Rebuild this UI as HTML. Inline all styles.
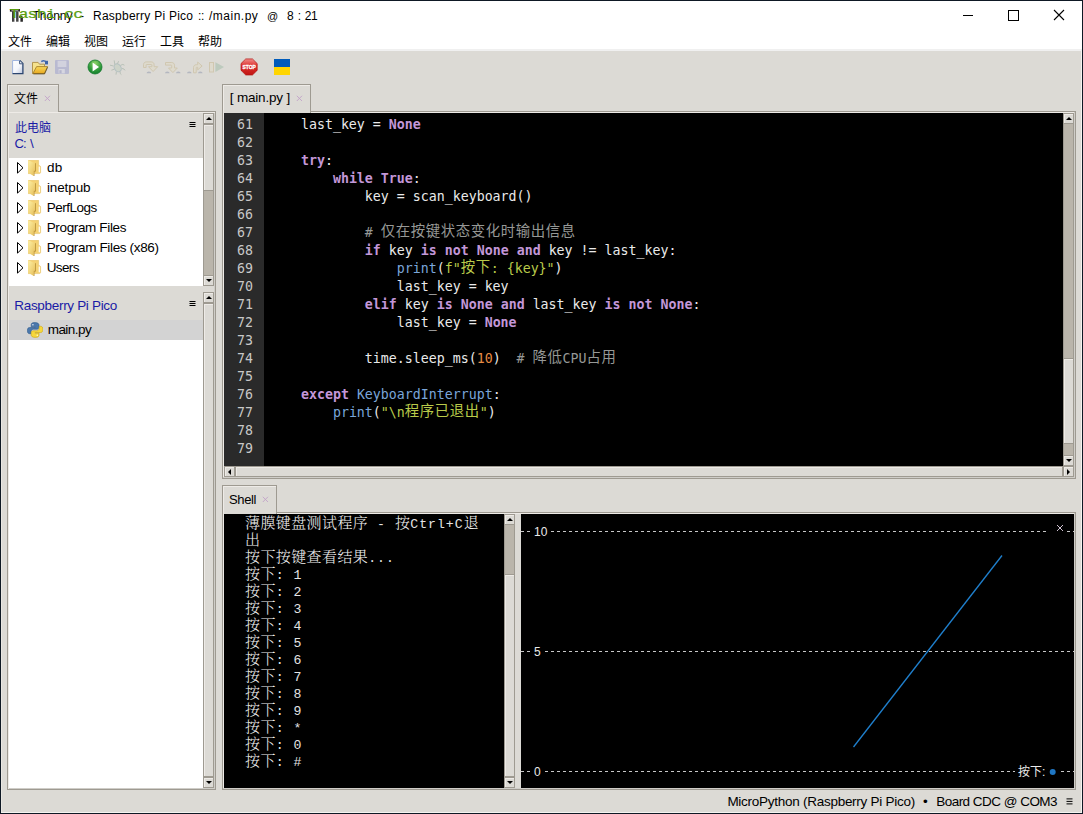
<!DOCTYPE html>
<html lang="zh-CN">
<head>
<meta charset="utf-8">
<title>Thonny - Raspberry Pi Pico :: /main.py @ 8 : 21</title>
<style>
*{box-sizing:border-box;margin:0;padding:0}
html,body{width:1083px;height:814px;overflow:hidden;background:#dcdad5}
body{position:relative;font-family:"Liberation Sans","Noto Sans CJK SC",sans-serif;font-size:13px;color:#000}
.a{position:absolute}
#win{position:absolute;left:0;top:0;width:1083px;height:814px;border:1px solid #0e1824;background:#dcdad5}
#titlebar{position:absolute;left:1px;top:1px;width:1081px;height:50px;background:#fff;border-bottom:2px solid #f0f0f0}
#title{position:absolute;left:0;top:9px;font-size:12px;line-height:15px;white-space:pre;color:#000}
#title span{position:absolute;top:0}
#wm{position:absolute;left:9.4px;top:5px;font-family:"Liberation Mono",monospace;font-weight:normal;-webkit-text-stroke:0.3px #5a9e10;font-size:16.6px;letter-spacing:-0.85px;transform:scaleY(0.8);transform-origin:0 14px;line-height:18px;color:#5a9e10;white-space:pre}
.menu{position:absolute;top:34px;font-size:12px;line-height:16px;white-space:pre}
.tab{position:absolute;background:#dcdad5;border:1px solid #9e9a91;border-bottom:none;box-shadow:inset 1px 1px 0 #eeebe7}
.tl{position:absolute;white-space:pre;font-size:13.5px;line-height:16px}
.tx{position:absolute}
.panel{position:absolute;border:1px solid #9e9a91;background:#dcdad5;box-shadow:inset 1px 1px 0 #eeebe7,inset -1px -1px 0 #cfcdc8}
.sb{position:absolute;background:#bab5ab;border:1px solid #9e9a91}
.btn{position:absolute;background:#dcdad5;border:1px solid #9e9a91;box-shadow:inset 1px 1px 0 #eeebe7}
.au,.ad,.al,.ar{position:absolute;width:0;height:0;border:3px solid transparent}
.au{border-top:none;border-bottom:3px solid #000;border-left-width:3px;border-right-width:3px}
.ad{border-bottom:none;border-top:3px solid #000}
.ar{border-right:none;border-left:3px solid #000}
.al{border-left:none;border-right:3px solid #000}
.trow{position:absolute;left:9px;width:194px;height:20px}
.trow svg.tri{position:absolute;left:8px;top:4.6px}
.trow svg.fold{position:absolute;left:19px;top:3px}
.trow .lbl{position:absolute;left:38px;top:2px;font-size:13.5px;line-height:16px;white-space:pre}
.blue{color:#1a1aa6}
#code{position:absolute;left:264px;top:113px;width:799px;height:353px;background:#000;overflow:hidden}
#gutter{position:absolute;left:224px;top:113px;width:40px;height:353px;background:#2a2a2a;overflow:hidden}
.ln,.cl{position:absolute;height:18px;line-height:18px;white-space:pre;font-family:"DejaVu Sans Mono","Noto Sans CJK SC",monospace;font-size:13.288px;color:#eaeaea}
.ln{color:#c8c8c8;left:13px}
.cl{left:5px}
.k{color:#c397d8;font-weight:bold}
.b{color:#7aa6da}
.s{color:#b9ca4a}
.n{color:#e78c45}
.c{color:#969896}
.cj{line-height:0;font-family:"Noto Sans CJK SC",sans-serif;font-size:14.4px;letter-spacing:0.6px;position:relative;top:-1.4px}
#shell{position:absolute;left:224px;top:514px;width:280px;height:274px;background:#000;overflow:hidden}
.sl{position:absolute;left:21px;height:17px;line-height:17px;white-space:pre;font-family:"Liberation Mono","Noto Serif CJK SC",monospace;font-size:13.2px;letter-spacing:0.98px;color:#e4e4e4}
.sj{line-height:0;font-family:"Noto Serif CJK SC",serif;font-weight:300;font-size:15px;letter-spacing:0.4px;position:relative;top:0.7px;color:#f0f0f0}
#plot{position:absolute;left:521px;top:514px;width:553px;height:274px;background:#000;overflow:hidden}
#plot .pl{position:absolute;font-size:12px;line-height:14px;color:#eaeaea;white-space:pre}
#status{position:absolute;top:794px;left:728px;font-size:13px;line-height:16px;white-space:pre}

</style>
</head>
<body>
<div id="win"></div>
<div id="titlebar"></div>
<svg class="a" style="left:9px;top:8px" width="16" height="16" viewBox="0 0 16 16"><defs><linearGradient id="gth" x1="0" y1="0" x2="1" y2="0"><stop offset="0" stop-color="#1c1c1c"/><stop offset="0.55" stop-color="#4a4a4a"/><stop offset="1" stop-color="#d0d0d0"/></linearGradient></defs><path d="M0.9 1h10v2.600000000000001h-10z" fill="#161616"/><path d="M2.4 2h7v0.9h-7z" fill="#9a9a9a"/><path d="M3.1 3.6h2.8v10.1h-2.8z" fill="url(#gth)"/><path d="M7.2 3.6h2.8v10.1h-2.8z" fill="url(#gth)"/><path d="M10 8.300000000000001c2.2-1.3 3.9-0.4 3.9 1.4v4h-2.5v-3.4c0-0.7-0.5-0.8-1.4-0.3z" fill="#2a2a2a"/></svg>
<div id="title"><span style="left:32.5px">Thonny</span><span style="left:80px">-</span><span style="left:93px;letter-spacing:0.25px">Raspberry Pi Pico</span><span style="left:198px;letter-spacing:-0.4px">::</span><span style="left:209px;letter-spacing:0.5px">/main.py</span><span style="left:267px;font-size:11px">@</span><span style="left:287px">8</span><span style="left:297.8px">:</span><span style="left:304.7px;letter-spacing:-0.3px">21</span></div>
<div id="wm">Tashi.cc</div>
<div class="menu" style="left:8px">文件</div>
<div class="menu" style="left:46px">编辑</div>
<div class="menu" style="left:84px">视图</div>
<div class="menu" style="left:122px">运行</div>
<div class="menu" style="left:160px">工具</div>
<div class="menu" style="left:198px">帮助</div>
<svg class="a" style="left:955px;top:5px" width="120" height="22" viewBox="0 0 120 22" fill="none" stroke="#000" stroke-width="1"><path d="M8 10.5h10"/><rect x="53.5" y="5.5" width="10" height="10"/><path d="M99 5l10 10M109 5l-10 10" stroke-width="1.1"/></svg>

<svg class="a" style="left:0;top:52px" width="300" height="30" viewBox="0 52 300 30">
<defs>
<linearGradient id="gpage" x1="0" y1="0" x2="1" y2="1"><stop offset="0" stop-color="#ffffff"/><stop offset="0.55" stop-color="#f4f6fb"/><stop offset="1" stop-color="#b9c3da"/></linearGradient>
<linearGradient id="gfold" x1="0" y1="0" x2="0" y2="1"><stop offset="0" stop-color="#f9d95c"/><stop offset="1" stop-color="#e8a81e"/></linearGradient>
<radialGradient id="grun" cx="0.5" cy="0.25" r="0.8"><stop offset="0" stop-color="#8fd46a"/><stop offset="0.6" stop-color="#2f9a3a"/><stop offset="1" stop-color="#0f7a2c"/></radialGradient>
<linearGradient id="gstop" x1="0" y1="0" x2="0" y2="1"><stop offset="0" stop-color="#f08a86"/><stop offset="0.45" stop-color="#dc2f2c"/><stop offset="1" stop-color="#c01512"/></linearGradient>
</defs>
<!-- new file -->
<path d="M12.5 60.4h7.3l3.2 3.2v10h-10.5z" fill="url(#gpage)"/>
<path d="M12.6 73.6v-13.1h7.2" stroke="#9fb4de" stroke-width="1" fill="none"/>
<path d="M19.8 60.5l3.1 3.1v10.100000000000001h-10.4" stroke="#2c4670" stroke-width="1.3" fill="none"/>
<path d="M19.6 60.8v3h3" fill="#eef2fa" stroke="#2c4670" stroke-width="0.9"/>
<!-- open folder -->
<path d="M32.5 62.4h5.6l1.4 1.8h5v9.3h-12z" fill="#f5e28e" stroke="#b3954f" stroke-width="1"/>
<path d="M36.6 66.6h11l-3.2 7h-11.600000000000001z" fill="url(#gfold)" stroke="#a5802c" stroke-width="0.9"/>
<path d="M33.4 73.9h11.2l3-6.6" stroke="#4a3a14" stroke-width="0.8" fill="none" opacity="0.8"/>
<path d="M41.3 61.6c1.6-1.2 3.600000000000001-1 4.800000000000001 0.4" stroke="#456cb0" stroke-width="1.5" fill="none"/>
<path d="M45 60.8h3v3.6h-3z" fill="#3d64a8"/>
<!-- save (disabled) -->
<rect x="55" y="60" width="14" height="14" rx="1" fill="#b9bad1"/>
<rect x="57.6" y="60.8" width="8.8" height="6.2" fill="#d2d2de"/>
<rect x="58.6" y="69" width="6.2" height="4.4" fill="#d6d6e0"/>
<rect x="59.4" y="70.2" width="2.2" height="3" fill="#b4b5cc"/>
<!-- run -->
<circle cx="95" cy="67" r="7" fill="url(#grun)" stroke="#13782c" stroke-width="0.8"/>
<path d="M92.6 62.6l6.4 4.4l-6.4 4.4z" fill="#fff"/>
<!-- debug (disabled) -->
<g stroke="#b7c0b6" stroke-width="1" fill="none" opacity="0.95">
<ellipse cx="117.7" cy="67.8" rx="3.2" ry="4.3" fill="#cdd3c8" stroke="#b2bfc2" transform="rotate(-32 117.7 67.8)"/>
<path d="M114.8 64.6l-0.6-4.200000000000001M117.4 63.8l1.2-2.6M113.6 66l-3.6-0.8M114.4 69.2l-3 1M116.4 71.8l-0.4 2.8M120.4 65.4l2.4-1l1.6 0.8M121.8 68.4l2.2 0.6l1 1.4M120 71.6l0.4 2.2l1 0.8"/>
</g>
<!-- step over (disabled) -->
<g fill="#dedacd" stroke="#d0c7b0" stroke-width="1" stroke-linejoin="round">
<path d="M143.5 67.5v-2.8c0-1.6 1.2-2.8 2.8-2.8h5c1.6 0 2.8 1.2 2.8 2.8v2h3.6l-4.6 4.8l-4.6-4.8h3.4v-1.6c0-0.4-0.2-0.6-0.6-0.6h-4.600000000000001c-0.4 0-0.6 0.2-0.6 0.6v2.4z"/>
</g>
<path d="M146.6 73.2a2.3 1.8 0 0 1 4.6 0z" fill="#b4b7c0"/>
<!-- step into (disabled) -->
<g fill="#dedacd" stroke="#d0c7b0" stroke-width="1" stroke-linejoin="round">
<path d="M165.5 62.5h6.2c1.6 0 2.8 1.2 2.8 2.8v2.7h2.8l-4.400000000000006 4.6l-4.4-4.6h3.2v-2.3c0-0.4-0.2-0.6-0.6-0.6h-5.6z"/>
</g>
<path d="M165 73.2a2.3 1.8 0 0 1 4.6 0zM176 73.2a2.3 1.8 0 0 1 4.6 0z" fill="#b4b7c0"/>
<!-- step out (disabled) -->
<g fill="#dedacd" stroke="#d0c7b0" stroke-width="1" stroke-linejoin="round">
<path d="M193.5 72.8v-5.3c0-1.6 1.2-2.8 2.8-2.8h1.4v-2.6l4.4 3.9l-4.4 3.9v-2.6h-0.9c-0.4 0-0.6 0.2-0.6 0.6v4.9z"/>
</g>
<path d="M187 73.2a2.3 1.8 0 0 1 4.6 0zM198 73.2a2.3 1.8 0 0 1 4.6 0z" fill="#b4b7c0"/>
<!-- resume (disabled) -->
<rect x="209.5" y="62.5" width="4" height="9.5" fill="#dedacd" stroke="#d0c7b0" stroke-width="1"/>
<path d="M215.4 62.2l8.600000000000001 4.9l-8.6 4.9z" fill="#bdcabd"/>
<!-- stop -->
<path d="M245.75 58.9h6.7l4.75 4.7v6.7l-4.75 4.7h-6.7l-4.75-4.7v-6.7z" fill="url(#gstop)" stroke="#b31412" stroke-width="0.7"/>
<text x="249.1" y="69.3" text-anchor="middle" font-family="Liberation Sans,sans-serif" font-weight="bold" font-size="6" fill="#fff" stroke="#fff" stroke-width="0.35" textLength="13.4" lengthAdjust="spacingAndGlyphs">STOP</text>
<!-- flag -->
<rect x="274" y="59" width="16" height="8" fill="#005bbb"/>
<rect x="274" y="67" width="16" height="8" fill="#ffd500"/>
</svg>

<div class="tab" style="left:7px;top:84px;width:52px;height:28px"></div>
<div class="panel" style="left:7px;top:111px;width:209px;height:679px"></div>
<div class="a" style="left:9px;top:110px;width:49px;height:2px;background:#dcdad5"></div>
<div class="a" style="left:8px;top:110px;width:1px;height:2px;background:#eeebe7"></div>
<div class="tl" style="left:14px;top:90.5px;font-size:12px">文件</div>
<svg class="tx" style="left:44px;top:95px" width="7" height="7" viewBox="0 0 7 7"><path d="M0.8 0.8l5.2 5.2M6 0.8l-5.2 5.2" stroke="#c2a3ca" stroke-width="0.9" fill="none"/></svg>
<div class="tl blue" style="left:15px;top:119.5px;font-size:12px">此电脑</div>
<div class="tl blue" style="left:14.4px;top:136.3px;letter-spacing:-0.7px;font-size:13px">C:</div>
<div class="tl blue" style="left:30px;top:136.3px">\</div>
<svg class="a" style="left:189px;top:122px" width="7" height="6" viewBox="0 0 7 6"><path d="M0.5 0.5h6M0.5 2.5h6M0.5 4.5h6" stroke="#000" stroke-width="1"/></svg>
<div class="a" style="left:9px;top:158px;width:194px;height:128px;background:#fff"></div>
<div class="trow" style="top:157px"><svg class="tri" width="8" height="12" viewBox="0 0 8 12"><path d="M0.5 0.5l5.5 5.3l-5.5 5.3z" fill="#fff" stroke="#000" stroke-width="1"/></svg><svg class="fold" width="14" height="17" viewBox="0 0 14 17"><defs><linearGradient id="gf" x1="0" y1="0" x2="1" y2="1"><stop offset="0" stop-color="#fdf0a4"/><stop offset="1" stop-color="#e6bd58"/></linearGradient></defs><path d="M0.2 0.3h10.4v5.2c1.6 0.1 2 0.6 2 1.8v4.9c0 1-0.5 1.4-2 1.4h-10.4z" fill="#f5d273" stroke="#e2bd5c" stroke-width="0.5"/><path d="M10.7 6.6h1.2v5.6h-1.2z" fill="#fff"/><path d="M7.4 3.2v7.7h-1.5v5.1" stroke="#b48d36" stroke-width="1.1" fill="none"/><path d="M0.2 0.3l7 2.9v7.5h-1.5v5.2l-5.5-3.2z" fill="url(#gf)"/></svg><span class="lbl" style="left:37.9px;top:2.8px;letter-spacing:0.35px">db</span></div>
<div class="trow" style="top:177px"><svg class="tri" width="8" height="12" viewBox="0 0 8 12"><path d="M0.5 0.5l5.5 5.3l-5.5 5.3z" fill="#fff" stroke="#000" stroke-width="1"/></svg><svg class="fold" width="14" height="17" viewBox="0 0 14 17"><path d="M0.2 0.3h10.4v5.2c1.6 0.1 2 0.6 2 1.8v4.9c0 1-0.5 1.4-2 1.4h-10.4z" fill="#f5d273" stroke="#e2bd5c" stroke-width="0.5"/><path d="M10.7 6.6h1.2v5.6h-1.2z" fill="#fff"/><path d="M7.4 3.2v7.7h-1.5v5.1" stroke="#b48d36" stroke-width="1.1" fill="none"/><path d="M0.2 0.3l7 2.9v7.5h-1.5v5.2l-5.5-3.2z" fill="url(#gf)"/></svg><span class="lbl" style="left:37.9px;top:2.8px;letter-spacing:-0.097px">inetpub</span></div>
<div class="trow" style="top:197px"><svg class="tri" width="8" height="12" viewBox="0 0 8 12"><path d="M0.5 0.5l5.5 5.3l-5.5 5.3z" fill="#fff" stroke="#000" stroke-width="1"/></svg><svg class="fold" width="14" height="17" viewBox="0 0 14 17"><path d="M0.2 0.3h10.4v5.2c1.6 0.1 2 0.6 2 1.8v4.9c0 1-0.5 1.4-2 1.4h-10.4z" fill="#f5d273" stroke="#e2bd5c" stroke-width="0.5"/><path d="M10.7 6.6h1.2v5.6h-1.2z" fill="#fff"/><path d="M7.4 3.2v7.7h-1.5v5.1" stroke="#b48d36" stroke-width="1.1" fill="none"/><path d="M0.2 0.3l7 2.9v7.5h-1.5v5.2l-5.5-3.2z" fill="url(#gf)"/></svg><span class="lbl" style="left:37.7px;top:2.8px;letter-spacing:-0.498px">PerfLogs</span></div>
<div class="trow" style="top:217px"><svg class="tri" width="8" height="12" viewBox="0 0 8 12"><path d="M0.5 0.5l5.5 5.3l-5.5 5.3z" fill="#fff" stroke="#000" stroke-width="1"/></svg><svg class="fold" width="14" height="17" viewBox="0 0 14 17"><path d="M0.2 0.3h10.4v5.2c1.6 0.1 2 0.6 2 1.8v4.9c0 1-0.5 1.4-2 1.4h-10.4z" fill="#f5d273" stroke="#e2bd5c" stroke-width="0.5"/><path d="M10.7 6.6h1.2v5.6h-1.2z" fill="#fff"/><path d="M7.4 3.2v7.7h-1.5v5.1" stroke="#b48d36" stroke-width="1.1" fill="none"/><path d="M0.2 0.3l7 2.9v7.5h-1.5v5.2l-5.5-3.2z" fill="url(#gf)"/></svg><span class="lbl" style="left:37.7px;top:2.8px;letter-spacing:-0.356px">Program Files</span></div>
<div class="trow" style="top:237px"><svg class="tri" width="8" height="12" viewBox="0 0 8 12"><path d="M0.5 0.5l5.5 5.3l-5.5 5.3z" fill="#fff" stroke="#000" stroke-width="1"/></svg><svg class="fold" width="14" height="17" viewBox="0 0 14 17"><path d="M0.2 0.3h10.4v5.2c1.6 0.1 2 0.6 2 1.8v4.9c0 1-0.5 1.4-2 1.4h-10.4z" fill="#f5d273" stroke="#e2bd5c" stroke-width="0.5"/><path d="M10.7 6.6h1.2v5.6h-1.2z" fill="#fff"/><path d="M7.4 3.2v7.7h-1.5v5.1" stroke="#b48d36" stroke-width="1.1" fill="none"/><path d="M0.2 0.3l7 2.9v7.5h-1.5v5.2l-5.5-3.2z" fill="url(#gf)"/></svg><span class="lbl" style="left:37.7px;top:2.8px;letter-spacing:-0.346px">Program Files (x86)</span></div>
<div class="trow" style="top:257px"><svg class="tri" width="8" height="12" viewBox="0 0 8 12"><path d="M0.5 0.5l5.5 5.3l-5.5 5.3z" fill="#fff" stroke="#000" stroke-width="1"/></svg><svg class="fold" width="14" height="17" viewBox="0 0 14 17"><path d="M0.2 0.3h10.4v5.2c1.6 0.1 2 0.6 2 1.8v4.9c0 1-0.5 1.4-2 1.4h-10.4z" fill="#f5d273" stroke="#e2bd5c" stroke-width="0.5"/><path d="M10.7 6.6h1.2v5.6h-1.2z" fill="#fff"/><path d="M7.4 3.2v7.7h-1.5v5.1" stroke="#b48d36" stroke-width="1.1" fill="none"/><path d="M0.2 0.3l7 2.9v7.5h-1.5v5.2l-5.5-3.2z" fill="url(#gf)"/></svg><span class="lbl" style="left:37.7px;top:2.8px;letter-spacing:-0.626px">Users</span></div>
<div class="sb" style="left:203px;top:113px;width:11px;height:173px"></div>
<div class="btn" style="left:203px;top:113px;width:11px;height:11px"><i class="au" style="left:2px;top:3px"></i></div>
<div class="btn" style="left:203px;top:124px;width:11px;height:67px"></div>
<div class="btn" style="left:203px;top:275px;width:11px;height:11px"><i class="ad" style="left:2px;top:3px"></i></div>
<div class="tl blue" style="left:14.3px;top:297.6px;letter-spacing:-0.314px">Raspberry Pi Pico</div>
<svg class="a" style="left:189px;top:301px" width="7" height="6" viewBox="0 0 7 6"><path d="M0.5 0.5h6M0.5 2.5h6M0.5 4.5h6" stroke="#000" stroke-width="1"/></svg>
<div class="a" style="left:9px;top:320px;width:194px;height:468px;background:#fff"></div>
<div class="a" style="left:9px;top:320px;width:194px;height:20px;background:#d3d3d3"></div>
<svg class="a" style="left:27px;top:322px" width="16" height="16" viewBox="0 0 16 16"><path d="M7.8 0.6c-3.2 0-3.6 1.2-3.6 2.4v1.8h3.8v0.7h-5.4c-1.5 0-2.3 1.2-2.3 3.1s0.8 3.1 2.3 3.1h1.4v-2c0-1.4 1.1-2.5 2.5-2.5h3.6c1.1 0 1.9-0.8 1.9-1.9v-2.3c0-1.2-1-2.4-4.2-2.4z" fill="#4b78ac" stroke="#2f5a8c" stroke-width="0.6"/><circle cx="5.9" cy="2.7" r="0.8" fill="#dfe8f2"/><path d="M8.4 15.4c3.2 0 3.6-1.2 3.6-2.4v-1.8h-3.8v-0.7h5.4c1.5 0 2.3-1.2 2.3-3.1s-0.8-3.1-2.3-3.1h-1.4v2c0 1.4-1.1 2.5-2.5 2.5h-3.6c-1.1 0-1.9 0.8-1.9 1.9v2.3c0 1.2 1 2.4 4.2 2.4z" fill="#f6d73c" stroke="#c9a514" stroke-width="0.6"/><circle cx="10.3" cy="13.3" r="0.8" fill="#fff8d0"/></svg>

<div class="tl" style="left:47.7px;top:321.6px;letter-spacing:-0.537px">main.py</div>
<div class="sb" style="left:203px;top:292px;width:11px;height:496px"></div>
<div class="btn" style="left:203px;top:292px;width:11px;height:11px"><i class="au" style="left:2px;top:3px"></i></div>
<div class="btn" style="left:203px;top:303px;width:11px;height:474px"></div>
<div class="btn" style="left:203px;top:777px;width:11px;height:11px"><i class="ad" style="left:2px;top:3px"></i></div>

<div id="gutter">
<div class="ln" style="top:3px">61</div>
<div class="ln" style="top:21px">62</div>
<div class="ln" style="top:39px">63</div>
<div class="ln" style="top:57px">64</div>
<div class="ln" style="top:75px">65</div>
<div class="ln" style="top:93px">66</div>
<div class="ln" style="top:111px">67</div>
<div class="ln" style="top:129px">68</div>
<div class="ln" style="top:147px">69</div>
<div class="ln" style="top:165px">70</div>
<div class="ln" style="top:183px">71</div>
<div class="ln" style="top:201px">72</div>
<div class="ln" style="top:219px">73</div>
<div class="ln" style="top:237px">74</div>
<div class="ln" style="top:255px">75</div>
<div class="ln" style="top:273px">76</div>
<div class="ln" style="top:291px">77</div>
<div class="ln" style="top:309px">78</div>
<div class="ln" style="top:327px">79</div>
</div>
<div id="code">
<div class="cl" style="top:3px">    last_key = <span class="k">None</span></div>
<div class="cl" style="top:39px">    <span class="k">try</span>:</div>
<div class="cl" style="top:57px">        <span class="k">while</span> <span class="k">True</span>:</div>
<div class="cl" style="top:75px">            key = scan_keyboard()</div>
<div class="cl" style="top:111px">            <span class="c"># <span class="cj">仅在按键状态变化时输出信息</span></span></div>
<div class="cl" style="top:129px">            <span class="k">if</span> key <span class="k">is</span> <span class="k">not</span> <span class="k">None</span> <span class="k">and</span> key != last_key:</div>
<div class="cl" style="top:147px">                <span class="b">print</span>(<span class="s">f"<span class="cj">按下</span>: {key}"</span>)</div>
<div class="cl" style="top:165px">                last_key = key</div>
<div class="cl" style="top:183px">            <span class="k">elif</span> key <span class="k">is</span> <span class="k">None</span> <span class="k">and</span> last_key <span class="k">is</span> <span class="k">not</span> <span class="k">None</span>:</div>
<div class="cl" style="top:201px">                last_key = <span class="k">None</span></div>
<div class="cl" style="top:237px">            time.sleep_ms(<span class="n">10</span>)  <span class="c"># <span class="cj">降低</span>CPU<span class="cj">占用</span></span></div>
<div class="cl" style="top:273px">    <span class="k">except</span> <span class="b">KeyboardInterrupt</span>:</div>
<div class="cl" style="top:291px">        <span class="b">print</span>(<span class="s">"\n<span class="cj">程序已退出</span>"</span>)</div>
</div>
<div class="a" style="left:222px;top:111px;width:854px;height:1px;background:#9e9a91"></div>
<div class="a" style="left:222px;top:478px;width:854px;height:1px;background:#9e9a91"></div>
<div class="a" style="left:222px;top:111px;width:1px;height:368px;background:#9e9a91"></div>
<div class="a" style="left:1075px;top:111px;width:1px;height:368px;background:#9e9a91"></div>
<div class="a" style="left:223px;top:112px;width:852px;height:1px;background:#eeebe7"></div>
<div class="a" style="left:223px;top:112px;width:1px;height:366px;background:#eeebe7"></div>
<div class="a" style="left:223px;top:477px;width:852px;height:1px;background:#cfcdc8"></div>
<div class="a" style="left:1074px;top:112px;width:1px;height:366px;background:#cfcdc8"></div>
<div class="tab" style="left:222px;top:84px;width:89px;height:29px"></div>
<div class="a" style="left:224px;top:110px;width:86px;height:2px;background:#dcdad5"></div>
<div class="a" style="left:223px;top:110px;width:1px;height:2px;background:#eeebe7"></div>
<div class="tl" style="left:229.8px;top:90.2px;letter-spacing:-0.192px;font-size:13.5px">[ main.py ]</div>
<svg class="tx" style="left:296px;top:95px" width="7" height="7" viewBox="0 0 7 7"><path d="M0.8 0.8l5.2 5.2M6 0.8l-5.2 5.2" stroke="#c2a3ca" stroke-width="0.9" fill="none"/></svg>
<div class="sb" style="left:1063px;top:113px;width:11px;height:353px"></div>
<div class="btn" style="left:1063px;top:113px;width:11px;height:11px"><i class="au" style="left:2px;top:3px"></i></div>
<div class="btn" style="left:1063px;top:358px;width:11px;height:86px"></div>
<div class="btn" style="left:1063px;top:455px;width:11px;height:11px"><i class="ad" style="left:2px;top:3px"></i></div>
<div class="sb" style="left:224px;top:466px;width:850px;height:11px"></div>
<div class="btn" style="left:224px;top:466px;width:11px;height:11px"><i class="al" style="left:3px;top:2px"></i></div>
<div class="btn" style="left:235px;top:466px;width:828px;height:11px"></div>
<div class="btn" style="left:1063px;top:466px;width:11px;height:11px"><i class="ar" style="left:3px;top:2px"></i></div>

<div id="shell">
<div class="sl" style="top:1.8px"><span class="sj">薄膜键盘测试程序</span> - <span class="sj">按</span>Ctrl+C<span class="sj">退</span></div>
<div class="sl" style="top:18.8px"><span class="sj">出</span></div>
<div class="sl" style="top:35.8px"><span class="sj">按下按键查看结果</span>...</div>
<div class="sl" style="top:52.8px"><span class="sj">按下</span>: 1</div>
<div class="sl" style="top:69.8px"><span class="sj">按下</span>: 2</div>
<div class="sl" style="top:86.8px"><span class="sj">按下</span>: 3</div>
<div class="sl" style="top:103.8px"><span class="sj">按下</span>: 4</div>
<div class="sl" style="top:120.8px"><span class="sj">按下</span>: 5</div>
<div class="sl" style="top:137.8px"><span class="sj">按下</span>: 6</div>
<div class="sl" style="top:154.8px"><span class="sj">按下</span>: 7</div>
<div class="sl" style="top:171.8px"><span class="sj">按下</span>: 8</div>
<div class="sl" style="top:188.8px"><span class="sj">按下</span>: 9</div>
<div class="sl" style="top:205.8px"><span class="sj">按下</span>: *</div>
<div class="sl" style="top:222.8px"><span class="sj">按下</span>: 0</div>
<div class="sl" style="top:239.8px"><span class="sj">按下</span>: #</div>
</div>
<div class="a" style="left:222px;top:512px;width:854px;height:1px;background:#9e9a91"></div>
<div class="a" style="left:222px;top:789px;width:854px;height:1px;background:#9e9a91"></div>
<div class="a" style="left:222px;top:512px;width:1px;height:278px;background:#9e9a91"></div>
<div class="a" style="left:1075px;top:512px;width:1px;height:278px;background:#9e9a91"></div>
<div class="a" style="left:223px;top:513px;width:852px;height:1px;background:#eeebe7"></div>
<div class="a" style="left:223px;top:513px;width:1px;height:276px;background:#eeebe7"></div>
<div class="a" style="left:223px;top:788px;width:852px;height:1px;background:#cfcdc8"></div>
<div class="a" style="left:1074px;top:513px;width:1px;height:276px;background:#cfcdc8"></div>
<div class="tab" style="left:222px;top:485px;width:55px;height:29px"></div>
<div class="a" style="left:224px;top:511px;width:52px;height:2px;background:#dcdad5"></div>
<div class="a" style="left:223px;top:511px;width:1px;height:2px;background:#eeebe7"></div>
<div class="tl" style="left:229px;top:491.6px;letter-spacing:-0.355px;font-size:13px">Shell</div>
<svg class="tx" style="left:262px;top:496px" width="7" height="7" viewBox="0 0 7 7"><path d="M0.8 0.8l5.2 5.2M6 0.8l-5.2 5.2" stroke="#c2a3ca" stroke-width="0.9" fill="none"/></svg>
<div class="sb" style="left:504px;top:514px;width:11px;height:274px"></div>
<div class="btn" style="left:504px;top:514px;width:11px;height:11px"><i class="au" style="left:2px;top:3px"></i></div>
<div class="btn" style="left:504px;top:574px;width:11px;height:203px"></div>
<div class="btn" style="left:504px;top:777px;width:11px;height:11px"><i class="ad" style="left:2px;top:3px"></i></div>
<div class="a" style="left:515px;top:514px;width:6px;height:274px;background:#dcdad5"></div>

<div id="plot">
<svg class="a" style="left:0;top:0" width="553" height="274" viewBox="521 514 553 274" shape-rendering="crispEdges">
<path d="M521 531.5H530" stroke="#c8c8c8" stroke-width="1" stroke-dasharray="3 3" fill="none"/><path d="M551 531.5H1047" stroke="#c8c8c8" stroke-width="1" stroke-dasharray="3 3" fill="none"/><path d="M1067 531.5H1074" stroke="#c8c8c8" stroke-width="1" stroke-dasharray="3 3" fill="none"/>
<path d="M521 651.5H530" stroke="#c8c8c8" stroke-width="1" stroke-dasharray="3 3" fill="none"/><path d="M545 651.5H1074" stroke="#c8c8c8" stroke-width="1" stroke-dasharray="3 3" fill="none"/>
<path d="M521 771.5H530" stroke="#c8c8c8" stroke-width="1" stroke-dasharray="3 3" fill="none"/><path d="M545 771.5H1015" stroke="#c8c8c8" stroke-width="1" stroke-dasharray="3 3" fill="none"/><path d="M1061 771.5H1074" stroke="#c8c8c8" stroke-width="1" stroke-dasharray="3 3" fill="none"/>
<path d="M853.5 747L1002 555.5" stroke="#1f7fcc" stroke-width="1.3" fill="none" shape-rendering="auto"/>
<circle cx="1052.7" cy="772" r="3" fill="#1f77c4" shape-rendering="auto"/>
<path d="M1057 525l6 6M1063 525l-6 6" stroke="#e8d8ea" stroke-width="0.9" fill="none" shape-rendering="auto"/>
</svg>
<div class="pl" style="left:13px;top:11px">10</div>
<div class="pl" style="left:13px;top:131px">5</div>
<div class="pl" style="left:13px;top:251px">0</div>
<div class="pl" style="left:497px;top:251px">按下:</div>
</div>

<div class="tl" style="left:727.4px;top:793.6px;letter-spacing:-0.267px">MicroPython (Raspberry Pi Pico)</div>
<div class="tl" style="left:923px;top:793.6px">•</div>
<div class="tl" style="left:936.2px;top:793.6px;letter-spacing:-0.522px">Board CDC @ COM3</div>
<svg class="a" style="left:1066px;top:798px" width="7" height="7" viewBox="0 0 7 7"><path d="M0.5 0.9h6M0.5 3.4h6M0.5 5.9h6" stroke="#000" stroke-width="1"/></svg>
<div class="a" style="left:1px;top:812px;width:1081px;height:1px;background:#f4f3f0"></div>
<div class="a" style="left:1081px;top:51px;width:1px;height:762px;background:#f4f3f0"></div>
<div class="a" style="left:1px;top:51px;width:1px;height:761px;background:#e9e7e2"></div>

</body>
</html>
